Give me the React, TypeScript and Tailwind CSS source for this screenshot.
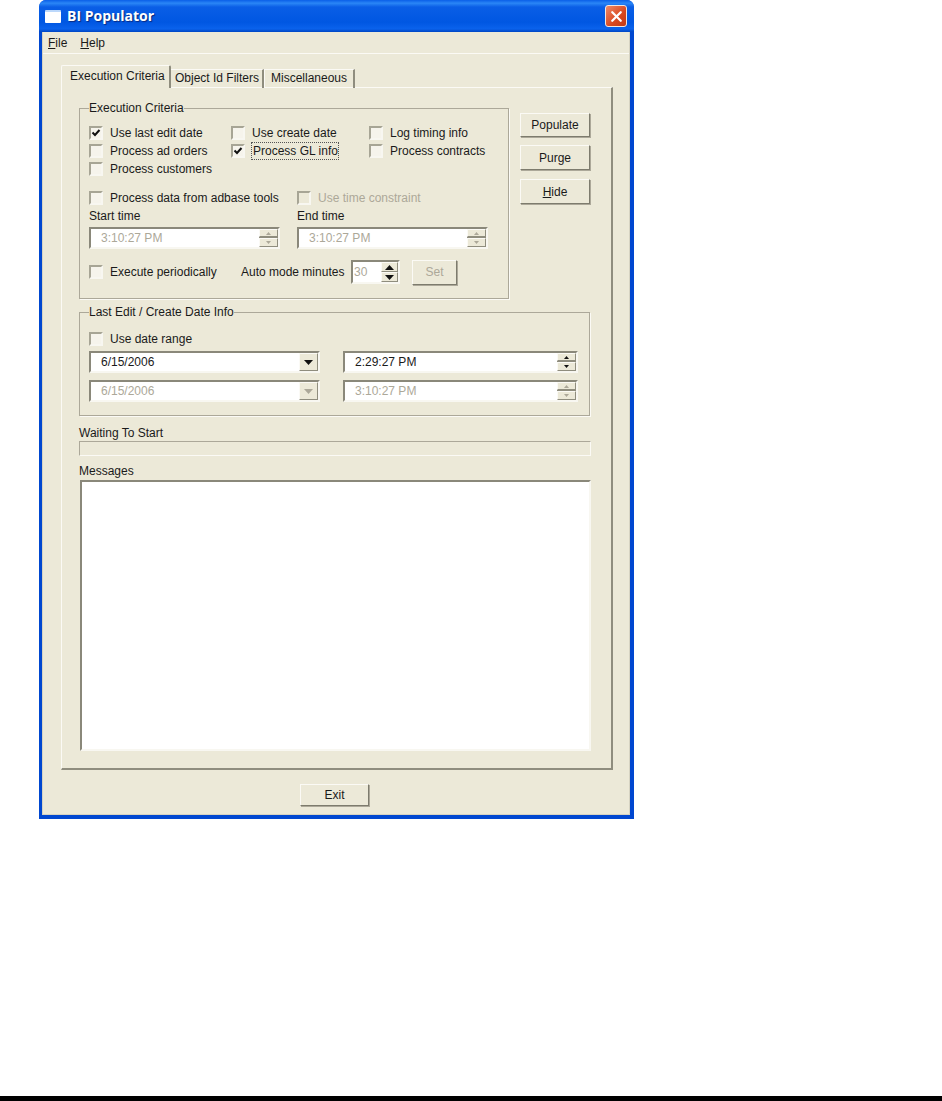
import { X } from "lucide-react";

const face = "bg-[#ece9d8]";

function Check({ label, checked, disabled, focus }: { label: string; checked?: boolean; disabled?: boolean; focus?: boolean }) {
    return (
        <div className={"flex items-center h-full " + (disabled ? "text-[#aca899]" : "")}>
            <div className={"w-[14px] h-[14px] shrink-0 border-2 border-t-[#a7a595] border-l-[#a7a595] border-r-[#f8f7f1] border-b-[#f8f7f1] flex items-center justify-center " + (disabled ? "bg-[#ece9d8]" : "bg-[#f6f4ec]")}>
                {checked && (
                    <svg width="10" height="10" viewBox="0 0 10 10">
                        <path d="M1.5 4.5 L4 7 L8.5 2" fill="none" stroke="#111" strokeWidth="2" />
                    </svg>
                )}
            </div>
            <span className={"ml-[7px] whitespace-nowrap " + (focus ? "outline-1 outline-dotted outline-[#555] -ml-0 pl-[1px]" : "")}>{label}</span>
        </div>
    );
}

function Arrow({ up, color }: { up?: boolean; color: string }) {
    return (
        <svg width="5" height="3" viewBox="0 0 5 3">
            <path d={up ? "M2.5 0 L5 3 L0 3 Z" : "M0 0 L5 0 L2.5 3 Z"} fill={color} />
        </svg>
    );
}

function Raised({ className, children }: { className?: string; children?: React.ReactNode }) {
    return (
        <div className={"flex items-center justify-center bg-[#ece9d8] border border-t-[#fbfaf5] border-l-[#fbfaf5] border-r-[#8f8d7e] border-b-[#8f8d7e] " + (className ?? "")}>
            {children}
        </div>
    );
}

function Sunken({ className, children }: { className?: string; children?: React.ReactNode }) {
    return (
        <div className={"flex items-center bg-white border-2 border-t-[#8a887a] border-l-[#8a887a] border-r-[#f8f7f1] border-b-[#f8f7f1] " + (className ?? "")}>
            {children}
        </div>
    );
}

function TimeField({ value, disabled, className }: { value: string; disabled?: boolean; className: string }) {
    const c = disabled ? "#aca899" : "#111";
    return (
        <Sunken className={"h-[22px] pl-[10px] " + className}>
            <span className={"flex-1 " + (disabled ? "text-[#aca899]" : "")}>{value}</span>
            <div className="flex flex-col w-[19px] h-[18px] gap-[1px] bg-[#8f8d7e]">
                <Raised className="h-[8px] w-full"><Arrow up color={c} /></Raised>
                <Raised className="h-[9px] w-full"><Arrow color={c} /></Raised>
            </div>
        </Sunken>
    );
}

function DateField({ value, disabled }: { value: string; disabled?: boolean }) {
    return (
        <Sunken className="h-[22px] w-[231px] pl-[10px]">
            <span className={"flex-1 " + (disabled ? "text-[#aca899]" : "")}>{value}</span>
            <Raised className="w-[19px] h-[18px]">
                <svg width="9" height="5" viewBox="0 0 9 5">
                    <path d="M0 0 L9 0 L4.5 5 Z" fill={disabled ? "#aca899" : "#111"} />
                </svg>
            </Raised>
        </Sunken>
    );
}

function Button({ children, className, disabled }: { children: React.ReactNode; className?: string; disabled?: boolean }) {
    return (
        <div className={"flex items-center justify-center border border-t-[#fbfaf5] border-l-[#fbfaf5] border-r-[#7d7b6d] border-b-[#7d7b6d] shadow-[1px_1px_0_#aca899] " + (disabled ? "text-[#aca899] " : "") + (className ?? "")}>
            {children}
        </div>
    );
}

function Group({ title, className, children }: { title: string; className: string; children: React.ReactNode }) {
    return (
        <div className={"relative border border-[#aca899] shadow-[1px_1px_0_#fbfaf5] pl-[9px] " + className}>
            <span className={"absolute -top-[8px] left-[9px] leading-[14px] " + face}>{title}</span>
            {children}
        </div>
    );
}

function Tab({ label, active, className }: { label: string; active?: boolean; className?: string }) {
    if (active) {
        return (
            <div className={"relative z-10 w-[110px] h-[23px] -mr-[1px] pb-[2px] flex items-center pl-[8px] rounded-t-[2px] border-t border-l border-[#fbfaf5] border-r-2 border-r-[#8f8d7e] " + face}>
                {label}
            </div>
        );
    }
    return (
        <div className={"mt-[3px] h-[19px] pb-[2px] flex items-center border-t border-l border-[#fbfaf5] border-r-2 border-r-[#8f8d7e] whitespace-nowrap " + (className ?? "")}>
            {label}
        </div>
    );
}

export default function App() {
    return (
        <div className="w-[942px] h-[1101px] bg-white flex flex-col overflow-hidden text-[12px] leading-[16px] text-[#1a1a1a] font-['Liberation_Sans',sans-serif]">
            {/* window */}
            <div className="ml-[39px] w-[595px] h-[819px] flex flex-col rounded-t-[7px] overflow-hidden bg-[#0047d0]">
                <div className="h-[32px] shrink-0 flex items-center pl-[6px] pr-[7px] bg-[linear-gradient(180deg,#0a5fe8_0%,#2a86f6_10%,#0a5ee6_22%,#0057e2_70%,#0a62ec_90%,#0046c4_100%)]">
                    <div className="w-[16px] h-[13px] bg-white border-t-2 border-t-[#bcd8fb] rounded-[1px]" />
                    <span className="ml-[6px] flex-1 text-white font-bold text-[14px] font-['Open_Sans',sans-serif] [text-shadow:1px_1px_1px_#0a2a80]">BI Populator</span>
                    <div className="w-[22px] h-[22px] rounded-[3px] border border-[#f3e6df] bg-[linear-gradient(135deg,#ef8a68,#d9481f_60%,#c23a14)] flex items-center justify-center">
                        <X size={17} color="white" strokeWidth={3.2} />
                    </div>
                </div>
                <div className={"flex-1 ml-[3px] mr-[4px] mb-[4px] border-l border-r border-b border-[#d6d3c2] flex flex-col " + face}>
                    {/* menu */}
                    <div className="h-[22px] shrink-0 flex items-center gap-[13px] pl-[5px] border-b border-[#fbfaf5]">
                        <span><u>F</u>ile</span>
                        <span><u>H</u>elp</span>
                    </div>
                    {/* tabs */}
                    <div className="mt-[11px] ml-[18px] h-[23px] flex items-end relative z-10 -mb-[1px]">
                        <Tab label="Execution Criteria" active />
                        <Tab label="Object Id Filters" className="w-[94px] pl-[4px]" />
                        <Tab label="Miscellaneous" className="w-[91px] pl-[6px]" />
                    </div>
                    {/* panel */}
                    <div className="ml-[18px] w-[552px] h-[683px] shrink-0 pl-[17px] pt-[20px] border-t border-l border-[#fbfaf5] border-r-2 border-b-2 border-r-[#8f8d7e] border-b-[#8f8d7e]">
                        <div className="flex">
                            <Group title="Execution Criteria" className="w-[430px] h-[191px] pt-[15px]">
                                <div className="grid grid-cols-[142px_138px_1fr] grid-rows-[18px_18px_17px]">
                                    <Check label="Use last edit date" checked />
                                    <Check label="Use create date" />
                                    <Check label="Log timing info" />
                                    <Check label="Process ad orders" />
                                    <Check label="Process GL info" checked focus />
                                    <Check label="Process contracts" />
                                    <Check label="Process customers" />
                                </div>
                                <div className="mt-[12px] h-[18px] grid grid-cols-[208px_1fr]">
                                    <Check label="Process data from adbase tools" />
                                    <Check label="Use time constraint" disabled />
                                </div>
                                <div className="h-[18px] grid grid-cols-[208px_1fr] items-center">
                                    <span>Start time</span>
                                    <span>End time</span>
                                </div>
                                <div className="mt-[2px] grid grid-cols-[208px_1fr]">
                                    <TimeField value="3:10:27 PM" disabled className="w-[191px]" />
                                    <TimeField value="3:10:27 PM" disabled className="w-[191px]" />
                                </div>
                                <div className="mt-[10px] h-[26px] flex items-center">
                                    <div className="w-[152px] h-[18px]">
                                        <Check label="Execute periodically" />
                                    </div>
                                    <span className="w-[110px]">Auto mode minutes</span>
                                    <Sunken className="w-[49px] h-[24px] pl-[1px]">
                                        <span className="flex-1 text-[#aca899]">30</span>
                                        <div className="flex flex-col w-[17px] h-[20px]">
                                            <Raised className="h-[10px] w-full">
                                                <svg width="9" height="5" viewBox="0 0 9 5"><path d="M4.5 0 L9 5 L0 5 Z" fill="#111" /></svg>
                                            </Raised>
                                            <Raised className="h-[10px] w-full">
                                                <svg width="9" height="5" viewBox="0 0 9 5"><path d="M0 0 L9 0 L4.5 5 Z" fill="#111" /></svg>
                                            </Raised>
                                        </div>
                                    </Sunken>
                                    <Button disabled className="ml-[12px] w-[45px] h-[25px]">Set</Button>
                                </div>
                            </Group>
                            <div className="ml-[11px] mt-[5px] flex flex-col">
                                <Button className="w-[70px] h-[24px]">Populate</Button>
                                <Button className="mt-[8px] w-[70px] h-[25px]">Purge</Button>
                                <Button className="mt-[9px] w-[70px] h-[25px]"><span><u>H</u>ide</span></Button>
                            </div>
                        </div>
                        <Group title="Last Edit / Create Date Info" className="mt-[13px] w-[511px] h-[104px] pt-[17px]">
                            <div className="h-[18px]">
                                <Check label="Use date range" />
                            </div>
                            <div className="mt-[3px] flex gap-[23px]">
                                <DateField value="6/15/2006" />
                                <TimeField value="2:29:27 PM" className="w-[235px]" />
                            </div>
                            <div className="mt-[7px] flex gap-[23px]">
                                <DateField value="6/15/2006" disabled />
                                <TimeField value="3:10:27 PM" disabled className="w-[235px]" />
                            </div>
                        </Group>
                        <div className="mt-[9px]">Waiting To Start</div>
                        <div className="w-[512px] h-[15px] border border-t-[#aca899] border-l-[#aca899] border-r-[#fbfaf5] border-b-[#fbfaf5]" />
                        <div className="mt-[7px]">Messages</div>
                        <Sunken className="mt-[1px] ml-[1px] w-[511px] h-[271px]" />
                    </div>
                    {/* exit */}
                    <div className="flex-1 flex items-start pl-[257px] pt-[14px]">
                        <Button className="w-[69px] h-[22px]">Exit</Button>
                    </div>
                </div>
            </div>
            <div className="flex-1" />
            <div className="h-[5px] bg-black" />
        </div>
    );
}
